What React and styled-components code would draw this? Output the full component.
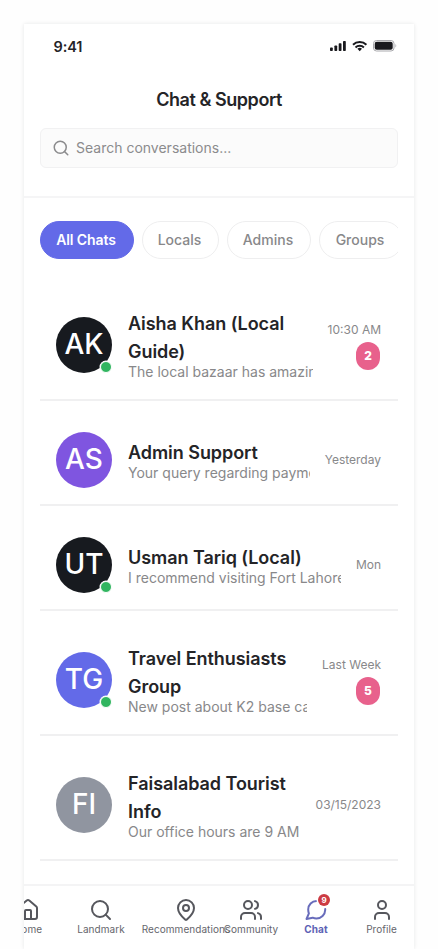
import React from "react";
import styled, { createGlobalStyle } from "styled-components";
import { Search, House, MapPin, Users, User } from "lucide-react";

const GlobalStyle = createGlobalStyle`
  *, *::before, *::after { box-sizing: border-box; }
  html, body { margin: 0; background: #fefefe; }
  body { font-family: Inter, "Liberation Sans", sans-serif; height: 949px; overflow: hidden; color: #242427; }
`;

const Page = styled.main`
  height: 949px;
  padding: 24px 24px 0;
  overflow: hidden;
`;

const Phone = styled.div`
  width: 390px;
  height: 925px;
  display: flex;
  flex-direction: column;
  background: #fff;
  box-shadow: 0 0 4px rgba(23, 26, 31, 0.1);
`;

const StatusBar = styled.div`
  display: flex;
  align-items: center;
  justify-content: space-between;
  height: 44px;
  padding: 0 16px 0 29.5px;
`;

const Clock = styled.span`
  font-size: 14.5px;
  font-weight: 600;
  letter-spacing: -0.1px;
`;

const StatusIcons = styled.svg`
  width: 68px;
  height: 14px;
  display: block;
`;

const Header = styled.header`
  height: 130px;
  padding: 18px 16px 0;
  border-bottom: 2px solid #f5f5f6;
`;

const Title = styled.h1`
  margin: 0 0 14px;
  font-size: 18px;
  line-height: 28px;
  font-weight: 600;
  letter-spacing: -0.45px;
  text-align: center;
`;

const SearchBox = styled.div`
  display: flex;
  align-items: center;
  gap: 6px;
  height: 40px;
  padding: 0 11px;
  border: 1px solid #f1f1f2;
  border-radius: 6px;
  background: #fbfbfb;
  color: #8b8b8d;
  font-size: 14px;
`;

const SearchHint = styled.span`
  padding-bottom: 2px;
`;

const Filters = styled.div`
  display: flex;
  gap: 8px;
  margin: 23px 16px 32px;
  overflow: hidden;
`;

const Chip = styled.button`
  flex: none;
  width: ${(p) => p.$width}px;
  height: 38px;
  padding: 0 2px 2px 0;
  border: 1px solid ${(p) => (p.$active ? "#636ae8" : "#eeeeef")};
  border-radius: 19px;
  background: ${(p) => (p.$active ? "#636ae8" : "#fff")};
  color: ${(p) => (p.$active ? "#fff" : "#88888a")};
  font-family: inherit;
  font-size: 14px;
  font-weight: ${(p) => (p.$active ? 600 : 500)};
  letter-spacing: ${(p) => (p.$active ? "-0.1px" : "0")};
`;

const ChatList = styled.div`
  flex: 1;
  min-height: 0;
  display: flex;
  flex-direction: column;
  gap: 15px;
  padding: 0 16px;
`;

const ChatRow = styled.article`
  flex: none;
  display: flex;
  align-items: center;
  gap: 16px;
  padding: 16px 17px 16px 16px;
  border-bottom: 2px solid #f0f0f1;
`;

const Avatar = styled.div`
  position: relative;
  flex: none;
  display: grid;
  place-items: center;
  width: 56px;
  height: 56px;
  border-radius: 50%;
  background: ${(p) => p.$color};
  color: #fff;
  font-size: 28px;
  font-weight: 450;
  line-height: 54px;
  padding-bottom: 2px;
`;

const Online = styled.span`
  position: absolute;
  right: 0;
  bottom: 0;
  width: 12px;
  height: 12px;
  border: 1.5px solid #fff;
  border-radius: 50%;
  background: #30b55f;
  box-shadow: 0 0 0 0.5px #fff;
`;

const Summary = styled.div`
  flex: 1;
  min-width: 0;
  padding: 3px 0 1px;
  margin-right: -1px;
`;

const Name = styled.h2`
  margin: 0;
  font-size: 18px;
  line-height: 28px;
  font-weight: 600;
  letter-spacing: -0.05px;
`;

const Preview = styled.p`
  margin: -4px 0 0;
  font-size: 14px;
  line-height: 20px;
  color: #88888a;
  white-space: nowrap;
  overflow: hidden;
`;

const Meta = styled.div`
  flex: none;
  display: flex;
  flex-direction: column;
  align-items: flex-end;
  gap: 2px;
  font-size: 12px;
  line-height: 20px;
  color: #88888a;
`;

const Unread = styled.span`
  width: 24px;
  height: 28px;
  margin-right: 1px;
  border-radius: 12px;
  background: #e8618c;
  color: #fff;
  font-weight: 800;
  line-height: 27px;
  text-align: center;
`;

const NavClip = styled.nav`
  flex: none;
  height: 65px;
  overflow: hidden;
  border-top: 2px solid #f4f4f5;
  background: #fff;
`;

const NavItems = styled.div`
  display: grid;
  grid-template-columns: 42px 104px 66px 64px 66px 65px;
  margin-left: -17px;
`;

const NavItem = styled.div`
  display: flex;
  flex-direction: column;
  align-items: center;
  padding-top: 12px;
  color: ${(p) => (p.$active ? "#5d62b5" : "#65666c")};
  font-size: 10px;
  font-weight: ${(p) => (p.$active ? 700 : 400)};
  line-height: 15px;
  letter-spacing: 0.05px;
  white-space: nowrap;
`;

const NavIcon = styled.span`
  position: relative;
  display: block;
  height: 24px;
  color: ${(p) => (p.$active ? "#686cbb" : "#56575d")};
  svg { display: block; }
`;

const NavBadge = styled.span`
  position: absolute;
  top: -4px;
  right: -2px;
  width: 12px;
  height: 12px;
  border-radius: 50%;
  background: #cc3b43;
  box-shadow: 0 0 0 1.5px #fff;
  color: #fff;
  font-size: 8px;
  font-weight: 700;
  line-height: 12px;
  text-align: center;
`;

const filters = [
  { label: "All Chats", width: 94 },
  { label: "Locals", width: 77 },
  { label: "Admins", width: 84 },
  { label: "Groups", width: 84 },
];

const chats = [
  { initials: "AK", color: "#171a1f", online: true, name: "Aisha Khan (Local Guide)", text: "The local bazaar has amazing", time: "10:30 AM", unread: 2 },
  { initials: "AS", color: "#7f55e0", name: "Admin Support", text: "Your query regarding payment", time: "Yesterday" },
  { initials: "UT", color: "#171a1f", online: true, name: "Usman Tariq (Local)", text: "I recommend visiting Fort Lahore", time: "Mon" },
  { initials: "TG", color: "#636ae8", online: true, name: "Travel Enthusiasts Group", text: "New post about K2 base camp", time: "Last Week", unread: 5 },
  { initials: "FI", color: "#9095a0", name: "Faisalabad Tourist Info", text: "Our office hours are 9 AM", time: "03/15/2023" },
];

function ChatBubble({ size }) {
  return (
    <svg width={size} height={size} viewBox="0 0 24 24" fill="none" stroke="currentColor" strokeWidth="2" strokeLinecap="round" strokeLinejoin="round">
      <path d="M12.5 3a8.5 8.5 0 0 0-8.3 8.5c0 1.6.2 2.6.7 3.8L2.5 21l6.2-1.3a9 9 0 0 0 3.8.8 8.7 8.7 0 0 0 8.7-8.5v-1" />
    </svg>
  );
}

const tabs = [
  { label: "Home", Icon: House },
  { label: "Landmark", Icon: Search },
  { label: "Recommendations", Icon: MapPin },
  { label: "Community", Icon: Users },
  { label: "Chat", Icon: ChatBubble, active: true, badge: 9 },
  { label: "Profile", Icon: User },
];

function StatusGlyphs() {
  return (
    <StatusIcons viewBox="0 0 68 14" fill="#19191d">
      <rect x="0" y="8.5" width="2.8" height="3.5" rx="0.8" />
      <rect x="4.4" y="6.5" width="2.8" height="5.5" rx="0.8" />
      <rect x="8.7" y="4.2" width="2.8" height="7.8" rx="0.8" />
      <rect x="13" y="2" width="2.8" height="10" rx="0.8" />
      <g fill="none" stroke="#19191d" strokeWidth="2">
        <path d="M23 5.8a9.6 9.6 0 0 1 13.4 0" />
        <path d="M25.5 8.5a6 6 0 0 1 8.4 0" />
      </g>
      <path d="M27.4 9.8a3.5 3.5 0 0 1 4.6 0L29.7 12.2Z" />
      <rect x="43.5" y="1.5" width="20.5" height="10.5" rx="3" fill="none" stroke="#a9a9ad" />
      <rect x="44.7" y="2.7" width="18" height="8" rx="2" />
      <path d="M65.4 5v3.6c1.2-.6 1.2-3 0-3.6" fill="#b5b5b8" />
    </StatusIcons>
  );
}

export default function App() {
  return (
    <Page>
      <GlobalStyle />
      <Phone>
        <StatusBar>
          <Clock>9:41</Clock>
          <StatusGlyphs />
        </StatusBar>
        <Header>
          <Title>Chat &amp; Support</Title>
          <SearchBox>
            <Search size={18} strokeWidth={2} />
            <SearchHint>Search conversations...</SearchHint>
          </SearchBox>
        </Header>
        <Filters>
          {filters.map((f, i) => (
            <Chip key={f.label} $width={f.width} $active={i === 0}>{f.label}</Chip>
          ))}
        </Filters>
        <ChatList>
          {chats.map((c) => (
            <ChatRow key={c.initials}>
              <Avatar $color={c.color}>
                {c.initials}
                {c.online && <Online />}
              </Avatar>
              <Summary>
                <Name>{c.name}</Name>
                <Preview>{c.text}</Preview>
              </Summary>
              <Meta>
                <span>{c.time}</span>
                {c.unread && <Unread>{c.unread}</Unread>}
              </Meta>
            </ChatRow>
          ))}
        </ChatList>
        <NavClip>
          <NavItems>
            {tabs.map(({ label, Icon, active, badge }) => (
              <NavItem key={label} $active={active}>
                <NavIcon $active={active}>
                  <Icon size={24} strokeWidth={2} />
                  {badge && <NavBadge>{badge}</NavBadge>}
                </NavIcon>
                {label}
              </NavItem>
            ))}
          </NavItems>
        </NavClip>
      </Phone>
    </Page>
  );
}
